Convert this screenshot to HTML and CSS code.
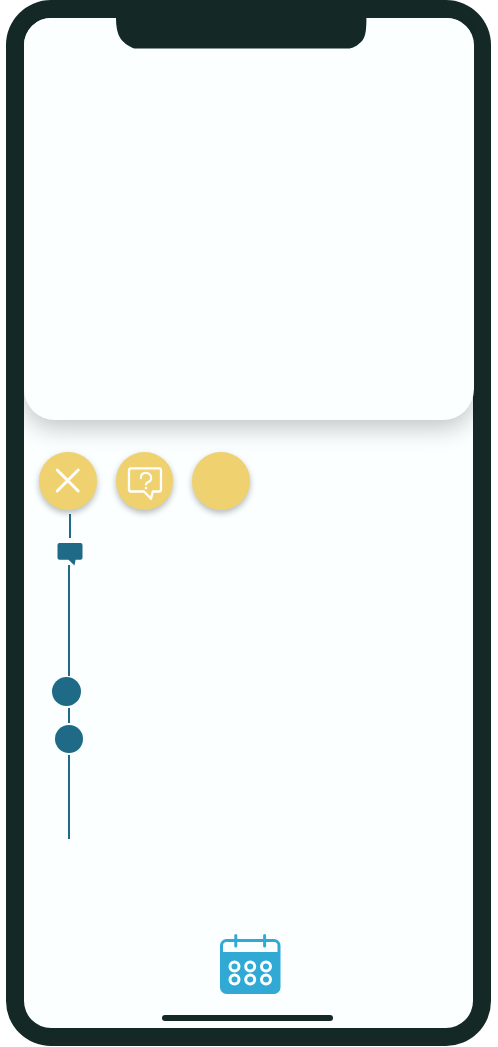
FILE: index.html
```html
<!DOCTYPE html>
<html lang="en">
<head>
<meta charset="utf-8">
<title>Timeline</title>
<link rel="stylesheet" href="styles.css">
</head>
<body>
<div class="phone">
  <div class="notch">
    <svg width="251" height="31" viewBox="0 0 251 31"><path d="M0 0H250.400C250.400 10 250 18 246 23C242 27.500 236 30.600 232 30.600H20C16 30.600 10 26.500 6.500 23C1.500 18 0 9 0 0Z"/></svg>
  </div>
  <main class="screen">
    <section class="card"></section>
    <nav class="actions">
      <button class="action" aria-label="Close">
        <svg width="57" height="57" viewBox="0 0 57 57"><path d="M18.200 18L39.200 39M39.200 18L18.200 39" stroke-width="2.900"/></svg>
      </button>
      <button class="action" aria-label="Help">
        <svg width="57" height="57" viewBox="0 0 57 57">
          <path d="M15 16.300H43Q45 16.300 45 18.300V37.500Q45 39.500 43 39.500H36.800L35 46.800L28 39.500H15Q13 39.500 13 37.500V18.300Q13 16.300 15 16.300Z" stroke-width="2.300"/>
          <path d="M24.800 26.300C24.800 22.700 26.800 20.900 29.700 20.900C32.800 20.900 35.200 22.900 35.200 25.900C35.200 28.300 33.800 29.500 31.900 30.200C30.300 30.700 30 31.400 30 32.600" stroke-width="2.100"/>
          <circle class="dot" cx="30" cy="36" r="1.300"/>
        </svg>
      </button>
      <button class="action" aria-label="More"></button>
    </nav>
    <div class="timeline">
      <i class="line line-a"></i>
      <svg class="bubble" width="26" height="23" viewBox="0 0 26 23"><path d="M2.500 0H23.500Q25.500 0 25.500 2V14.800Q25.500 16.800 23.500 16.800H18.600L17.500 22.600L11.500 16.800H2.500Q.5 16.800 .5 14.800V2Q.5 0 2.500 0Z"/></svg>
      <i class="line line-b"></i>
      <i class="node node-a"></i>
      <i class="line line-c"></i>
      <i class="node node-b"></i>
      <i class="line line-d"></i>
    </div>
    <svg class="calendar" width="61" height="60" viewBox="0 0 61 60">
      <rect class="body" x="0" y="5" width="60.500" height="55" rx="6.500"/>
      <path class="header" d="M3 18V11.500Q3 8 6.500 8H54Q57.500 8 57.500 11.500V18Z"/>
      <path class="pins" d="M15.800 1.500V12M44.600 1.500V12"/>
      <g class="days">
        <circle cx="14.500" cy="32.500" r="4.500"/><circle cx="30.200" cy="32.500" r="4.500"/><circle cx="46" cy="32.500" r="4.500"/>
        <circle cx="14.500" cy="45.500" r="4.500"/><circle cx="30.200" cy="45.500" r="4.500"/><circle cx="46" cy="45.500" r="4.500"/>
      </g>
    </svg>
    <div class="home-bar"></div>
  </main>
</div>
</body>
</html>
```
FILE: styles.css
```css
* { box-sizing: border-box; }
body {
  margin: 0;
  background: #fff;
  font-family: "Liberation Sans", sans-serif;
  overflow: hidden;
}
svg { display: block; }
.phone {
  position: relative;
  width: 485.300px;
  height: 1046px;
  margin-left: 6px;
  border-radius: 45px;
  padding: 18px;
  background: #142926;
}
.notch {
  position: absolute;
  z-index: 2;
  left: 110px;
  top: 18px;
  fill: #142926;
}
.screen {
  display: flex;
  flex-direction: column;
  height: 1010px;
  border-radius: 27px;
  background: #fbffff;
}
.card {
  flex: none;
  width: 450px;
  height: 402px;
  border-radius: 27px 27px 31px 31px;
  background: #fbffff;
  box-shadow: 0 8px 24px rgba(0, 0, 0, 0.23);
  clip-path: inset(0 0 -50px 0);
}
.actions {
  display: flex;
  gap: 19px;
  padding: 32px 0 0 15px;
}
.action {
  width: 57.500px;
  height: 57.500px;
  padding: 0;
  border: 0;
  border-radius: 50%;
  background: #efd26f;
  box-shadow: 0 3px 6px rgba(0, 0, 0, 0.28);
}
.action svg {
  fill: none;
  stroke: #fff;
  stroke-linecap: round;
  stroke-linejoin: round;
}
.action .dot {
  fill: #fff;
  stroke: none;
}
.timeline {
  display: flex;
  flex-direction: column;
  align-items: flex-start;
  height: 325px;
  margin: 4.500px 0 0 28px;
}
.line {
  width: 2px;
  margin-left: 16px;
  background: #1f6a87;
}
.line-a { height: 24px; margin-left: 17px; }
.line-b { height: 111px; margin-top: -1px; }
.line-c { height: 15px; margin-top: 2px; }
.line-d { height: 84px; margin-top: 2px; }
.bubble {
  margin: 5px 0 0 5px;
  fill: #1f6a87;
}
.node {
  border-radius: 50%;
  background: #1f6a87;
}
.node-a { width: 29px; height: 29px; margin-top: 1.400px; }
.node-b { width: 28px; height: 28px; margin: 1.600px 0 0 3px; }
.calendar { margin: 95px 0 0 196px; }
.calendar .body { fill: #30a9d5; }
.calendar .header { fill: #fbffff; }
.calendar .pins {
  fill: none;
  stroke: #30a9d5;
  stroke-width: 3;
  stroke-linecap: round;
}
.calendar .days {
  fill: none;
  stroke: #fbffff;
  stroke-width: 3;
}
.home-bar {
  width: 171px;
  height: 6px;
  margin: 21px 0 0 138px;
  border-radius: 3px;
  background: #142926;
}
```
